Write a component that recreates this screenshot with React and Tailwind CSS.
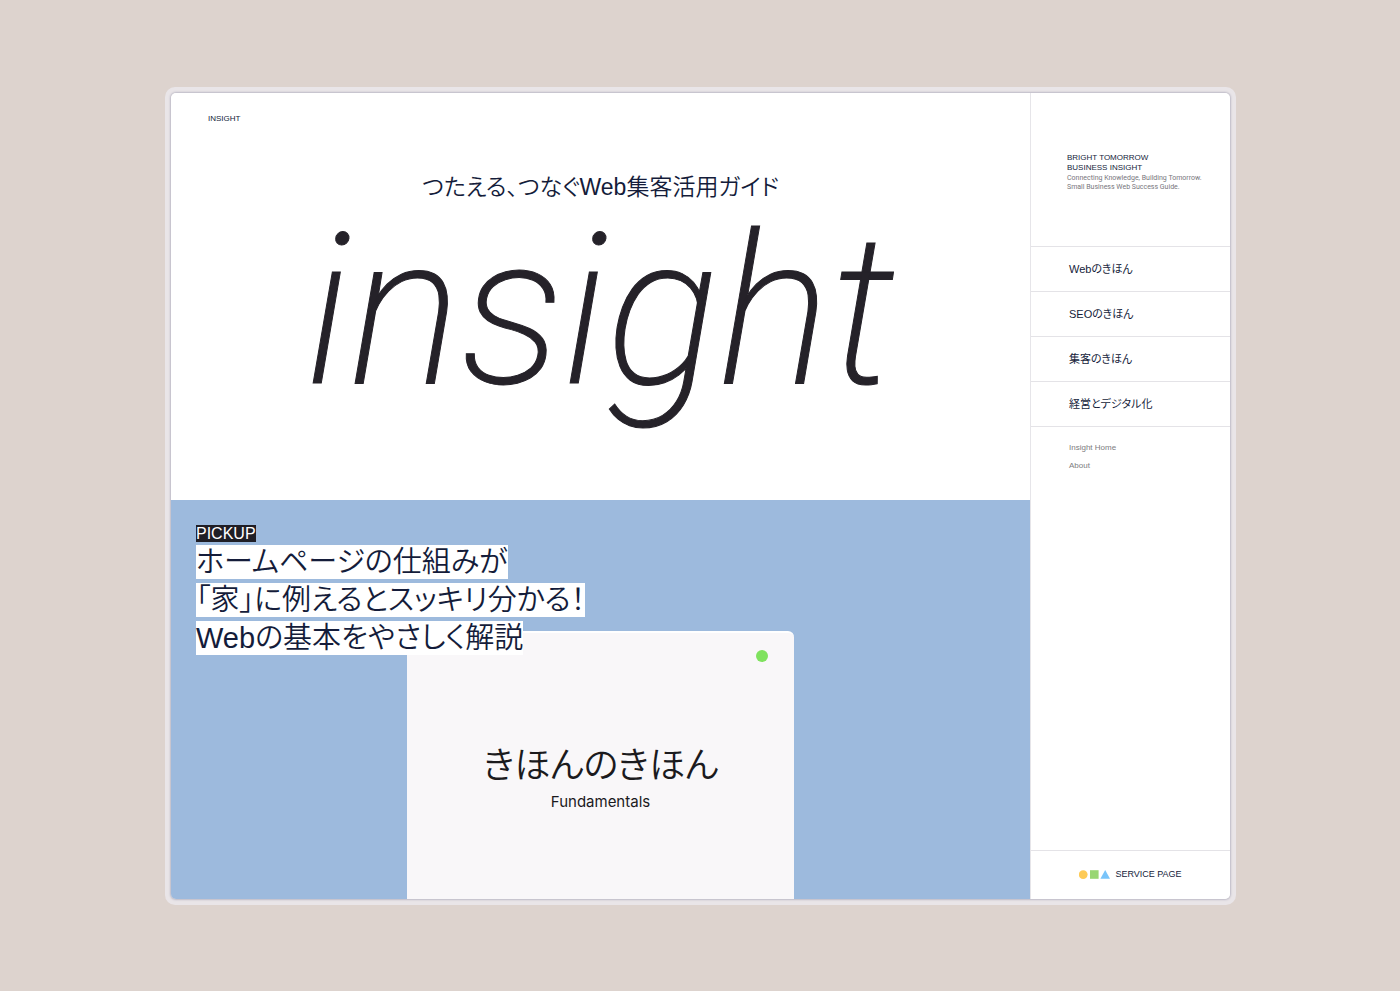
const topics = ['Webのきほん', 'SEOのきほん', '集客のきほん', '経営とデジタル化'];

const headline = ['ホームページの仕組みが', '「家」に例えるとスッキリ分かる！', 'Webの基本をやさしく解説'];

function Shapes() {
  return (
    <svg viewBox="0 0 32 10" className="h-[10px] w-8" aria-hidden="true">
      <circle cx="4.2" cy="4.6" r="4.4" fill="#fecb57" />
      <rect x="11" y="0.2" width="8.6" height="8.6" fill="#98d673" />
      <path d="M26.2 0 L31 8.8 H21.4 Z" fill="#79c4fa" />
    </svg>
  );
}

function Hero() {
  return (
    <header className="flex h-[407px] flex-col bg-white">
      <a href="#insight" className="mt-5 ml-[37px] self-start text-[8px] leading-[12px]">
        INSIGHT
      </a>
      <p className="mt-[46px] text-center text-[23px] leading-8">つたえる、つなぐWeb集客活用ガイド</p>
      <h1 className="mt-2 text-center font-[Roboto,sans-serif] text-[210px] leading-[200px] font-extralight text-[#252229] italic [-webkit-text-stroke:1px_#252229]">
        insight
      </h1>
    </header>
  );
}

function Pickup() {
  return (
    <section className="relative flex flex-1 items-end justify-center bg-[#9dbadd]">
      <article className="relative flex h-[268px] w-[387px] flex-col items-center rounded-t-md border-t-2 border-white bg-[#f9f7f9] pt-[107px] text-[#1b1a1d]">
        <span className="absolute top-[17px] right-[26px] size-3 rounded-full bg-[#80e25f]" />
        <h3 className="text-[36px] leading-[52px]">きほんのきほん</h3>
        <p className="font-[Inter,sans-serif] text-[15px] leading-5 font-normal">Fundamentals</p>
      </article>
      <div className="absolute top-[25px] left-[25px] flex flex-col items-start">
        <p className="bg-[#1f1e26] text-[16px] leading-[17px] text-white">PICKUP</p>
        <h2 className="mt-[3px] flex flex-col items-start gap-1 text-[29px] leading-[34px]">
          {headline.map((line) => (
            <span key={line} className="bg-white whitespace-nowrap">
              {line}
            </span>
          ))}
        </h2>
      </div>
    </section>
  );
}

function Sidebar() {
  return (
    <aside className="flex w-[200px] shrink-0 flex-col border-l border-[#e6e5e9] bg-white">
      <div className="h-[153px] pt-[60px] pl-9">
        <p className="text-[8px] leading-[10px]">
          BRIGHT TOMORROW
          <br />
          BUSINESS INSIGHT
        </p>
        <p className="mt-px font-[Roboto,sans-serif] text-[7px] leading-[9px] font-normal whitespace-nowrap text-[#77767c]">
          Connecting Knowledge, Building Tomorrow.
          <br />
          Small Business Web Success Guide.
        </p>
      </div>
      <nav className="border-t border-[#e4e3e7]">
        <ul>
          {topics.map((topic) => (
            <li key={topic} className="border-b border-[#e4e3e7]">
              <a href="#topic" className="flex h-11 items-center pl-[38px] text-[11px] font-normal">
                {topic}
              </a>
            </li>
          ))}
        </ul>
        <ul className="flex flex-col gap-1 pt-[14px] pl-[38px] text-[8px] leading-[14px] text-[#7d7c80]">
          <li>
            <a href="#home">Insight Home</a>
          </li>
          <li>
            <a href="#about">About</a>
          </li>
        </ul>
      </nav>
      <a
        href="#service"
        className="mt-auto flex h-[49px] items-center justify-center gap-1 border-t border-[#e4e3e7] text-[9px]"
      >
        <Shapes />
        SERVICE PAGE
      </a>
    </aside>
  );
}

export default function App() {
  return (
    <div className="flex min-h-screen bg-[#ddd3ce] pt-[87px] pr-[164px] pb-[86px] pl-[165px] font-['Liberation_Sans','Noto_Sans_CJK_JP',sans-serif] font-[350] text-[#141c3a] [font-feature-settings:'palt']">
      <div className="flex flex-1 rounded-[10px] bg-[#e9e5e8] p-[6px]">
        <div className="flex flex-1 overflow-hidden rounded-[5px] shadow-[0_0_2px_1px_#bdbac6]">
          <main className="flex min-w-0 flex-1 flex-col">
            <Hero />
            <Pickup />
          </main>
          <Sidebar />
        </div>
      </div>
    </div>
  );
}
